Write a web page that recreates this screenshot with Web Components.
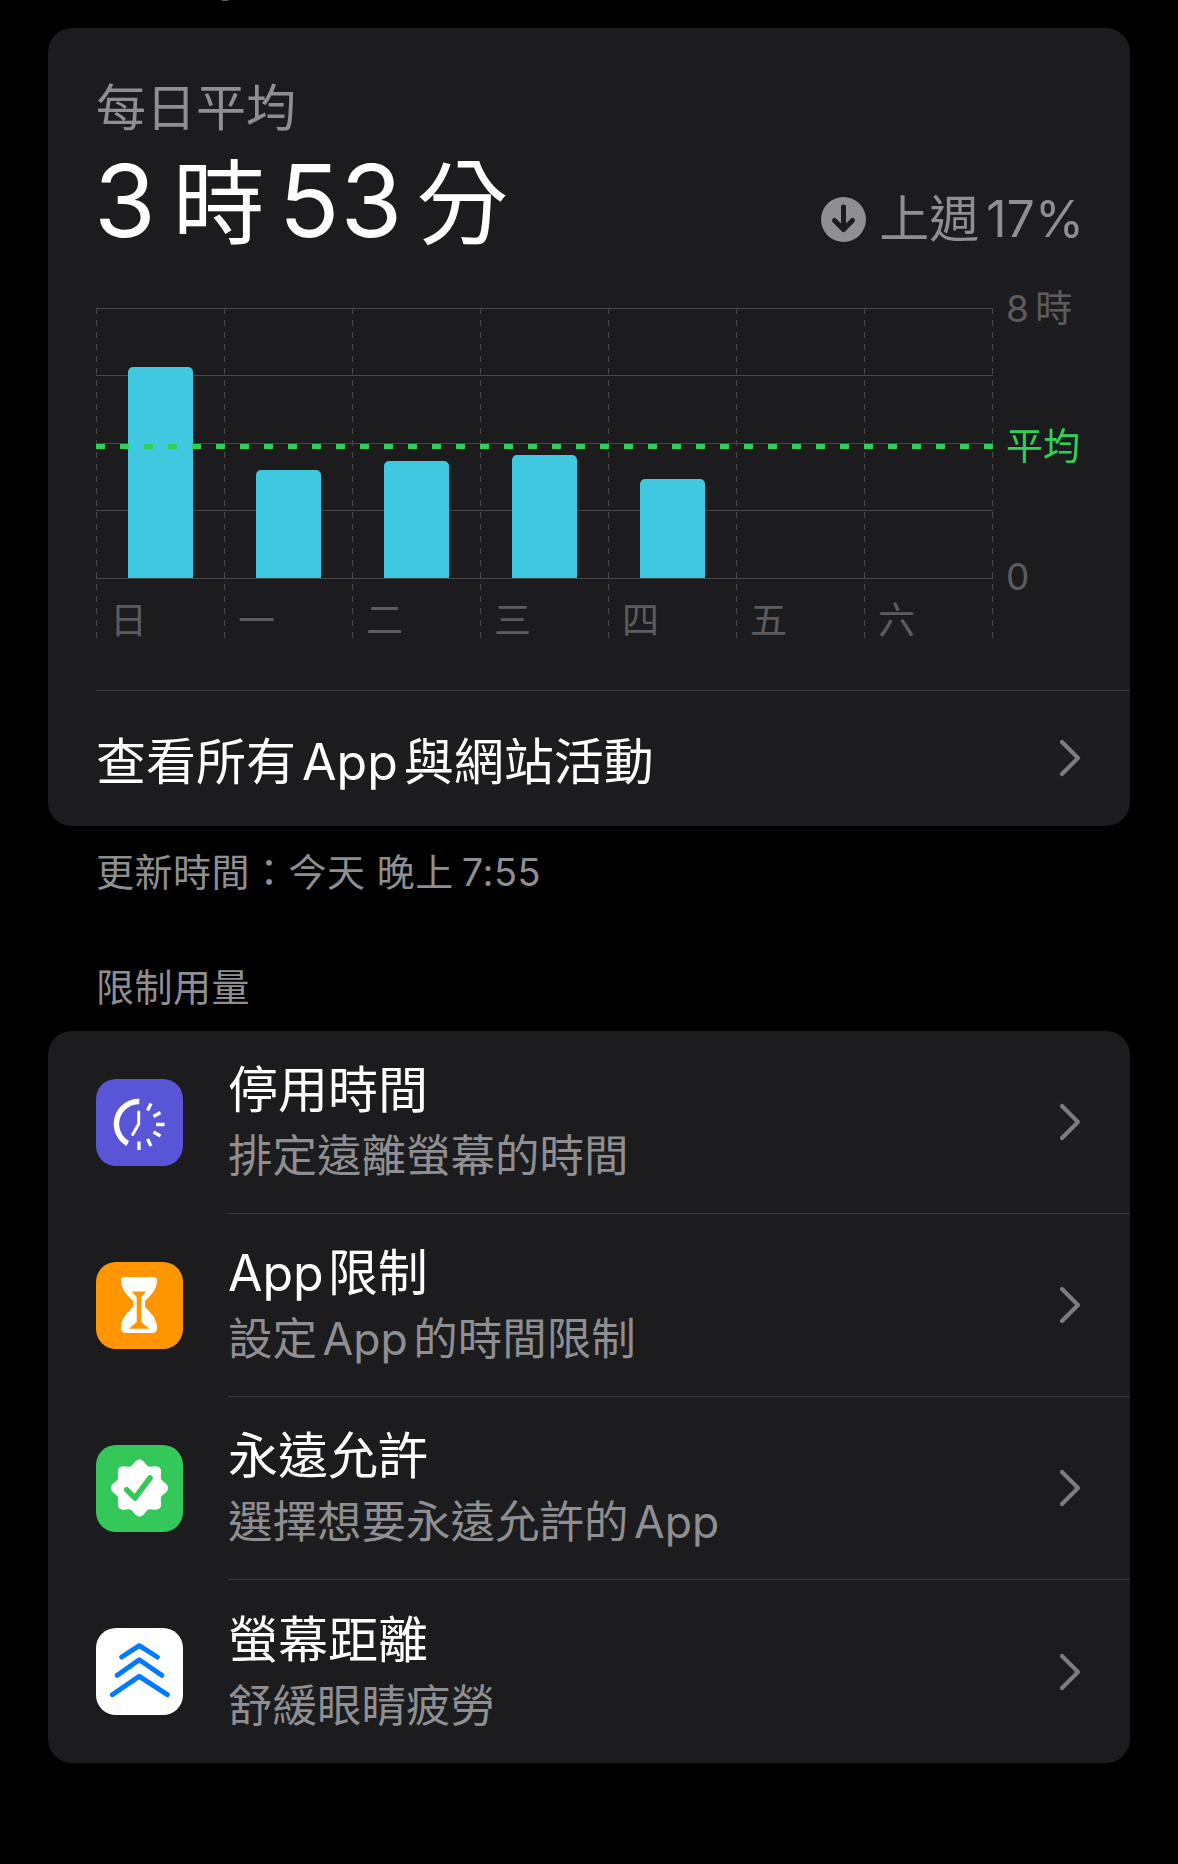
<!DOCTYPE html>
<html lang="zh-Hant">
<head>
<meta charset="utf-8">
<title>螢幕使用時間</title>
<style>
  html, body { margin: 0; background: #000; }
  body {
    height: 1864px;
    overflow: hidden;
    color: #fff;
    font-family: Inter, "Noto Sans CJK TC", sans-serif;
  }
  .page { display: flex; flex-direction: column; padding: 28px 48px 0; }
  .clipped { position: absolute; left: 222px; top: 0; width: 6px; height: 1px; background: #5a5a5a; }
</style>
</head>
<body>
<div class="clipped"></div>
<div class="page">
  <st-card>
    <st-summary label="每日平均" trend="上週 17%" hours="3" mins="53"></st-summary>
    <st-chart></st-chart>
    <st-link>查看所有 App 與網站活動</st-link>
  </st-card>
  <st-note>更新時間&#xFF1A;今天 晚上<span style="margin-left:8px">7:55</span></st-note>
  <st-heading>限制用量</st-heading>
  <st-card>
    <st-row sub="排定遠離螢幕的時間">
      <st-icon slot="icon" kind="downtime"></st-icon>停用時間
    </st-row>
    <st-row sub="設定 App 的時間限制">
      <st-icon slot="icon" kind="limits"></st-icon>App 限制
    </st-row>
    <st-row sub="選擇想要永遠允許的 App">
      <st-icon slot="icon" kind="always"></st-icon>永遠允許
    </st-row>
    <st-row sub="舒緩眼睛疲勞" last>
      <st-icon slot="icon" kind="distance"></st-icon>螢幕距離
    </st-row>
  </st-card>
</div>

<script>
  const CHEVRON = `<svg width="24" height="38" viewBox="0 0 24 38" fill="none">
    <path d="M4 3 L20 19 L4 35" stroke="#7c7c80" stroke-width="4.2" stroke-linecap="round" stroke-linejoin="round"/></svg>`

  class StElement extends HTMLElement {
    constructor() {
      super()
      this.attachShadow({ mode: 'open' })
    }
    connectedCallback() {
      this.shadowRoot.innerHTML = `<style>${this.styles()}</style>${this.html()}`
    }
  }

  class StCard extends StElement {
    styles() {
      return `:host { display: block; background: #1c1c1e; border-radius: 24px; overflow: hidden; }`
    }
    html() { return `<slot></slot>` }
  }

  class StSummary extends StElement {
    styles() {
      return `
        :host { display: block; padding: 55px 48px 0; }
        .label { font-size: 50px; line-height: 50px; color: #8e8e93; }
        .line { display: flex; justify-content: space-between; align-items: flex-end; height: 112px; margin-top: 13px; }
        .total { display: flex; align-items: baseline; font-size: 92px; line-height: 112px; margin: 0 0 -2px -2px; }
        .n { font-size: 100px; letter-spacing: 1px; }
        .u { margin: 0 14px 0 16px; }
        .u:last-child { margin: 0 0 0 13px; }
        .trend { display: flex; align-items: center; gap: 13px; color: #8e8e93; font-size: 50px; line-height: 56px; word-spacing: -7px; margin: 0 -2px 11px 0; }
        svg { display: block; }
      `
    }
    html() {
      return `
        <div class="label">${this.getAttribute('label')}</div>
        <div class="line">
          <div class="total">
            <span class="n">${this.getAttribute('hours')}</span><span class="u">時</span><span class="n">${this.getAttribute('mins')}</span><span class="u">分</span>
          </div>
          <div class="trend">
            <svg width="45" height="45" viewBox="0 0 45 45">
              <circle cx="22.5" cy="22.5" r="22.5" fill="#8e8e93"/>
              <path d="M22.5 10 V32 M13.5 23.5 L22.5 32.5 L31.5 23.5" fill="none" stroke="#1c1c1e" stroke-width="5" stroke-linecap="round" stroke-linejoin="round"/>
            </svg>
            <span>${this.getAttribute('trend')}</span>
          </div>
        </div>`
    }
  }

  class StChart extends StElement {
    styles() {
      return `
        :host { display: block; margin: 50px 0 0 48px; height: 382px; border-bottom: 1px solid #3a3a3c; }
        .wrap { display: grid; grid-template-columns: 897px 1fr; }
        .plot { display: grid; height: 330px; }
        .plot > * { grid-area: 1 / 1; }
        .days { display: grid; grid-template-columns: repeat(7, 128px) 1px; }
        .day {
          display: flex; flex-direction: column; justify-content: flex-end; height: 330px;
          background: repeating-linear-gradient(#48484a 0 6px, transparent 6px 12px) left top / 1px 100% no-repeat;
        }
        .well { height: 270px; margin-bottom: 60px; display: flex; align-items: flex-end; padding-left: 32px; }
        .bar { width: 65px; background: #40c8e0; border-radius: 5px 5px 0 0; }
        .name { height: 0; position: relative; }
        .name span { position: absolute; left: 14px; top: -37px; font-size: 37px; line-height: 40px; color: #5c5c5f; }
        .hours { display: grid; grid-template-rows: 67px 68px 67px 68px 1px; height: 271px; }
        .hours div { border-top: 1px solid #48484a; }
        .avg { height: 5px; margin-top: 136px; background: repeating-linear-gradient(90deg, #30d158 0 9px, transparent 9px 24px); }
        .axis { display: grid; grid-template-rows: 138px 132px 0; margin: -2px 0 0 13px; font-size: 37px; color: #5c5c5f; word-spacing: -4px; }
        .axis div { height: 0; display: flex; align-items: center; white-space: nowrap; }
        .axis .green { color: #30d158; }
      `
    }
    html() {
      const data = [['日', 211], ['一', 108], ['二', 117], ['三', 123], ['四', 99], ['五', 0], ['六', 0]]
      const cols = data.map(([name, h]) => `
        <div class="day">
          <div class="well">${h ? `<div class="bar" style="height:${h}px"></div>` : ''}</div>
          <div class="name"><span>${name}</span></div>
        </div>`).join('')
      return `
        <div class="wrap">
          <div class="plot">
            <div class="hours"><div></div><div></div><div></div><div></div><div></div></div>
            <div class="days">${cols}<div class="day"></div></div>
            <div class="avg"></div>
          </div>
          <div class="axis"><div>8 時</div><div class="green">平均</div><div>0</div></div>
        </div>`
    }
  }

  class StLink extends StElement {
    styles() {
      return `
        :host { display: flex; justify-content: space-between; align-items: center; height: 135px; padding: 0 48px; font-size: 50px; word-spacing: -8px; }
        .text { padding-bottom: 2px; }
        svg { display: block; margin-top: -2px; }
      `
    }
    html() { return `<div class="text"><slot></slot></div>${CHEVRON}` }
  }

  class StNote extends StElement {
    styles() {
      return `:host { display: block; padding: 0 48px; margin-top: 23px; font-size: 38px; line-height: 46px; letter-spacing: .5px; color: #8e8e93; }`
    }
    html() { return `<slot></slot>` }
  }

  class StHeading extends StElement {
    styles() {
      return `:host { display: block; padding: 0 48px; margin: 69px 0 21px; font-size: 38px; line-height: 46px; letter-spacing: .5px; color: #8e8e93; }`
    }
    html() { return `<slot></slot>` }
  }

  class StRow extends StElement {
    styles() {
      return `
        :host { display: grid; grid-template-columns: 132px 1fr; height: 183px; padding-left: 48px; align-items: center; }
        .body { display: flex; justify-content: space-between; align-items: center; height: 183px; padding-right: 48px; box-sizing: border-box; border-bottom: 1px solid #3a3a3c; }
        :host([last]) .body { border-bottom: 0; }
        .text { padding-bottom: 2px; }
        .title { font-size: 50px; line-height: 62px; word-spacing: -10px; }
        .sub { font-size: 44.5px; line-height: 54px; margin-top: 8px; color: #8e8e93; word-spacing: -7px; }
        svg { display: block; }
      `
    }
    html() {
      return `
        <slot name="icon"></slot>
        <div class="body">
          <div class="text"><div class="title"><slot></slot></div><div class="sub">${this.getAttribute('sub')}</div></div>
          ${CHEVRON}
        </div>`
    }
  }

  class StIcon extends StElement {
    styles() {
      return `
        :host { display: block; width: 87px; height: 87px; border-radius: 20px; overflow: hidden; }
        svg { display: block; }
      `
    }
    badge() {
      var points = []
      for (var i = 0; i < 240; i++) {
        var a = i / 240 * Math.PI * 2
        var r = 26 + 2.6 * Math.cos(8 * a)
        points.push((43.5 + r * Math.sin(a)).toFixed(2) + ' ' + (43 - r * Math.cos(a)).toFixed(2))
      }
      return 'M' + points.join(' L') + ' Z'
    }
    html() {
      const kinds = {
        downtime: `<rect width="87" height="87" fill="#5856d6"/>
          <g fill="none" stroke="#fff" stroke-linecap="butt">
            <path d="M43.3 22.5 A22.5 22.5 0 0 0 31.7 64.5" stroke-width="5.5"/>
            <path d="M42.7 33 V45 L36.7 55.5" stroke-width="3" stroke-linecap="round" stroke-linejoin="round"/>
            <path d="M55 24.5 L51.5 31.5 M64.5 33.5 L57.5 37.5 M68.5 45.5 H60 M64.5 57 L57.5 53 M55 67 L51.5 60 M43 71 V62.5" stroke-width="3.3"/>
          </g>`,
        limits: `<rect width="87" height="87" fill="#ff9500"/>
          <path d="M28 15 H58 Q61 15 61 18 C61 27 56 32 49 39 V45 C56 52 61 57 61 66 Q61 71 56 71 H30 Q25 71 25 66 C25 57 30 52 37 45 V39 C30 32 25 27 25 18 Q25 15 28 15 Z" fill="#fff"/>
          <path d="M35.7 29.5 H50.3 L45.3 35 V60 L53.5 66.7 H32.7 L40.7 60 V35 Z" fill="#ff9500"/>`,
        always: `<rect width="87" height="87" fill="#34c759"/>
          <path d="${this.badge()}" fill="#fff"/>
          <path d="M30.7 44.7 L39 53 L54 33" fill="none" stroke="#34c759" stroke-width="5.5" stroke-linecap="round" stroke-linejoin="round"/>`,
        distance: `<rect width="87" height="87" fill="#fff"/>
          <g fill="none" stroke="#007aff" stroke-width="5" stroke-linecap="round" stroke-linejoin="round">
            <path d="M25.7 29 L43.3 17.7 L61.3 29"/>
            <path d="M21.3 47.3 L43.3 31.7 L65.7 47.3"/>
            <path d="M16.3 66.7 L43.3 48.3 L71.3 66.7"/>
          </g>`
      }
      return `<svg width="87" height="87" viewBox="0 0 87 87">${kinds[this.getAttribute('kind')]}</svg>`
    }
  }

  customElements.define('st-card', StCard)
  customElements.define('st-summary', StSummary)
  customElements.define('st-chart', StChart)
  customElements.define('st-link', StLink)
  customElements.define('st-note', StNote)
  customElements.define('st-heading', StHeading)
  customElements.define('st-row', StRow)
  customElements.define('st-icon', StIcon)
</script>
</body>
</html>
